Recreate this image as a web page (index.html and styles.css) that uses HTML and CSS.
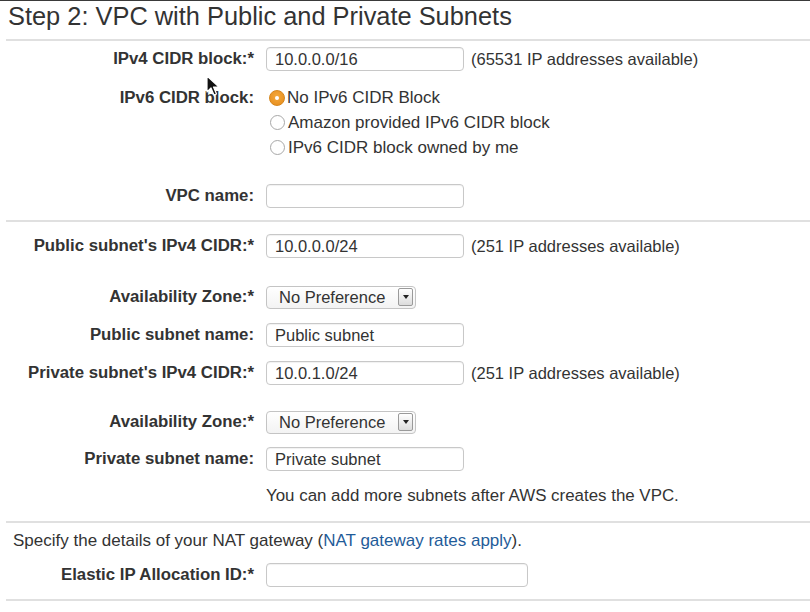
FILE: index.html
```html
<!DOCTYPE html>
<html>
<head>
<meta charset="utf-8">
<link rel="stylesheet" href="styles.css">
</head>
<body>
<div class="topline"></div>
<h1 class="title">Step 2: VPC with Public and Private Subnets</h1>
<div class="rule"></div>

<div class="section s1">
  <div class="row">
    <div class="label">IPv4 CIDR block:*</div>
    <div class="input">10.0.0.0/16</div>
    <div class="hint">(65531 IP addresses available)</div>
  </div>
  <div class="row radios mt14">
    <div class="label">IPv6 CIDR block:</div>
    <div class="radio-list">
      <div class="radio-item"><span class="radio on"></span>No IPv6 CIDR Block</div>
      <div class="radio-item"><span class="radio"></span>Amazon provided IPv6 CIDR block</div>
      <div class="radio-item"><span class="radio"></span>IPv6 CIDR block owned by me</div>
    </div>
  </div>
  <div class="row mt24">
    <div class="label">VPC name:</div>
    <div class="input"></div>
  </div>
</div>
<div class="rule"></div>

<div class="section s2">
  <div class="row">
    <div class="label">Public subnet's IPv4 CIDR:*</div>
    <div class="input">10.0.0.0/24</div>
    <div class="hint">(251 IP addresses available)</div>
  </div>
  <div class="row mt27">
    <div class="label">Availability Zone:*</div>
    <div class="select"><span class="sel-text">No Preference</span><span class="sel-btn"><span class="tri"></span></span></div>
  </div>
  <div class="row mt14">
    <div class="label">Public subnet name:</div>
    <div class="input">Public subnet</div>
  </div>
  <div class="row mt14">
    <div class="label">Private subnet's IPv4 CIDR:*</div>
    <div class="input">10.0.1.0/24</div>
    <div class="hint">(251 IP addresses available)</div>
  </div>
  <div class="row mt25">
    <div class="label">Availability Zone:*</div>
    <div class="select"><span class="sel-text">No Preference</span><span class="sel-btn"><span class="tri"></span></span></div>
  </div>
  <div class="row mt13">
    <div class="label">Private subnet name:</div>
    <div class="input">Private subnet</div>
  </div>
  <div class="row mt13">
    <div class="label"></div>
    <div class="note">You can add more subnets after AWS creates the VPC.</div>
  </div>
</div>
<div class="rule"></div>

<div class="section s3">
  <div class="intro">Specify the details of your NAT gateway (<a class="link" href="#">NAT gateway rates apply</a>).</div>
  <div class="row mt10">
    <div class="label">Elastic IP Allocation ID:*</div>
    <div class="input wide"></div>
  </div>
</div>
<div class="rule"></div>

<svg class="cursor" width="14" height="22" viewBox="0 0 14 22">
  <path d="M1 1 L1 17 L5 13 L8 20 L10.5 19 L7.5 12 L13 12 Z" fill="#111" stroke="#fff" stroke-width="1.2" stroke-linejoin="round"/>
</svg>
</body>
</html>
```

FILE: styles.css
```css
html, body {
  margin: 0;
  padding: 0;
  background: #fff;
}
body {
  position: relative;
  font-family: "Liberation Sans", Arial, Helvetica, sans-serif;
  color: #333;
  font-size: 16.5px;
  width: 810px;
  height: 612px;
  overflow: hidden;
}
.topline {
  height: 1px;
  background: #3a3a3a;
}
.title {
  margin: 0;
  padding: 0 8px;
  font-weight: normal;
  font-size: 25.4px;
  line-height: 30px;
  color: #333;
  height: 38px;
}
.rule {
  margin-left: 6px;
  height: 2px;
  background: #e0e0e0;
}
.section {
  display: flex;
  flex-direction: column;
}
.s1 { padding-top: 6px; padding-bottom: 12px; }
.s2 { padding-top: 12px; padding-bottom: 13px; }
.s3 { padding-top: 6px; padding-bottom: 12px; }
.row {
  display: flex;
  align-items: center;
  height: 24px;
}
.mt10 { margin-top: 10px; }
.mt13 { margin-top: 13px; }
.mt14 { margin-top: 14px; }
.mt24 { margin-top: 24px; }
.mt25 { margin-top: 25px; }
.mt27 { margin-top: 27px; }
.label {
  width: 254px;
  margin-right: 12px;
  text-align: right;
  font-weight: bold;
  font-size: 16.8px;
  color: #333;
  flex-shrink: 0;
  white-space: nowrap;
}
.input {
  box-sizing: border-box;
  width: 198px;
  height: 24px;
  border: 1px solid #c8c8c8;
  border-radius: 4px;
  box-shadow: inset 0 1px 1px rgba(0,0,0,0.06);
  padding-left: 8px;
  line-height: 22px;
  font-size: 16.5px;
  color: #333;
  white-space: nowrap;
}
.input.wide { width: 262px; }
.hint {
  margin-left: 7px;
  font-size: 16.5px;
  white-space: nowrap;
}
.radios {
  height: 75px;
  align-items: flex-start;
}
.radios .label { line-height: 25px; }
.radio-list {
  display: flex;
  flex-direction: column;
}
.radio-item {
  display: flex;
  align-items: center;
  height: 25px;
  font-size: 17px;
  white-space: nowrap;
}
.radio {
  box-sizing: border-box;
  width: 15px;
  height: 15px;
  border-radius: 50%;
  border: 1px solid #a8a8a8;
  background: #fff;
  margin-left: 4px;
  margin-right: 3px;
  display: flex;
  align-items: center;
  justify-content: center;
}
.radio.on {
  width: 16px;
  height: 16px;
  margin-left: 3px;
  margin-right: 2px;
  border: 1px solid #d6861c;
  background: radial-gradient(circle at 50% 40%, #f5a93c, #e58b1a);
}
.radio.on::after {
  content: "";
  width: 4px;
  height: 4px;
  border-radius: 50%;
  background: #fff;
}
.select {
  box-sizing: border-box;
  width: 150px;
  height: 23px;
  border: 1px solid #c4c4c4;
  border-radius: 4px;
  background: linear-gradient(#ffffff, #f3f3f3);
  display: flex;
  align-items: center;
  justify-content: space-between;
  padding-left: 12px;
  padding-right: 2px;
}
.sel-text {
  font-size: 16.5px;
  white-space: nowrap;
}
.sel-btn {
  box-sizing: border-box;
  width: 15px;
  height: 18px;
  border: 1px solid #9a9a9a;
  border-radius: 2px;
  background: linear-gradient(#ffffff, #dcdcdc);
  display: flex;
  align-items: center;
  justify-content: center;
}
.tri {
  width: 0;
  height: 0;
  border-left: 3px solid transparent;
  border-right: 3px solid transparent;
  border-top: 4px solid #222;
}
.note {
  font-size: 16.9px;
  white-space: nowrap;
}
.intro {
  height: 24px;
  line-height: 24px;
  padding-left: 13px;
  font-size: 17px;
  white-space: nowrap;
}
.link {
  color: #1f5c99;
  text-decoration: none;
}
.cursor {
  position: absolute;
  left: 206px;
  top: 75px;
}
```
